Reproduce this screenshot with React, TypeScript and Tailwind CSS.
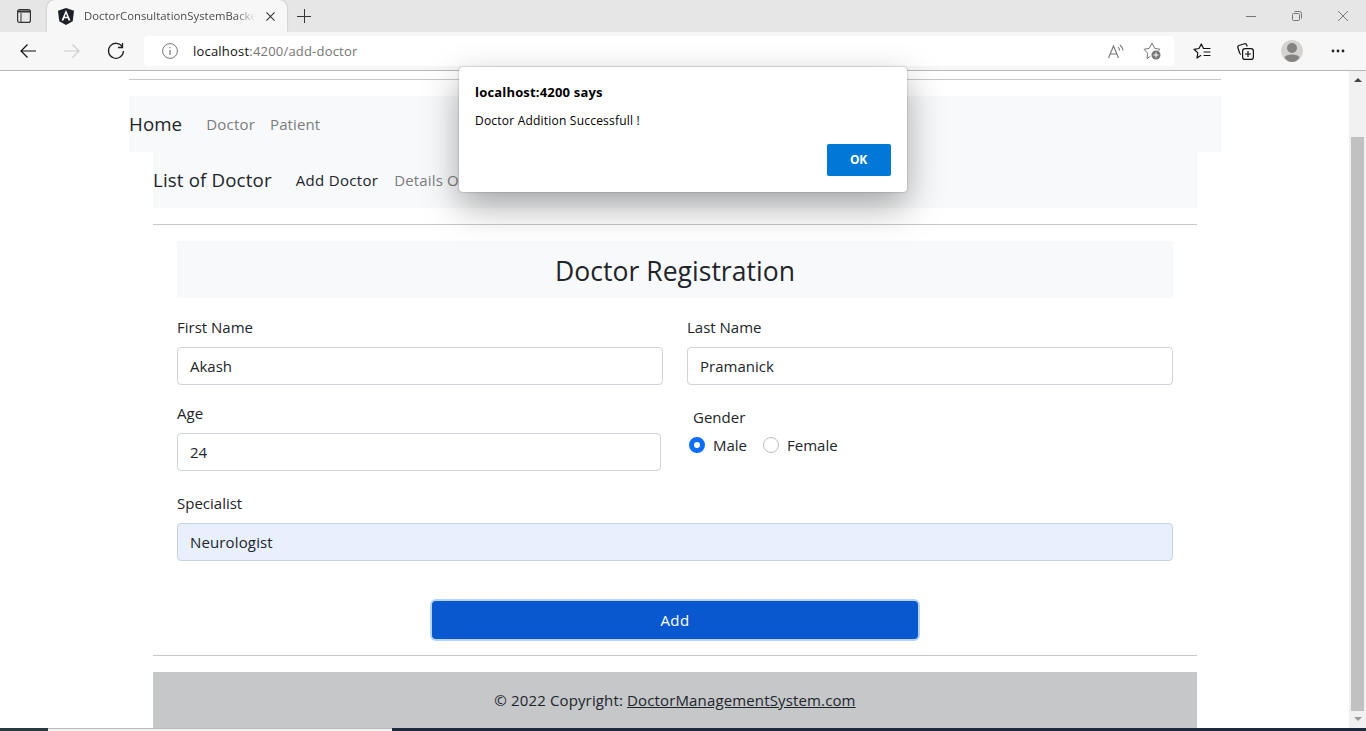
import React from "react";

function Star({ children, className }: { children?: React.ReactNode; className: string }) {
  return (
    <svg viewBox="0 0 18 18" fill="none" stroke="currentColor" strokeWidth="1" strokeLinejoin="round" strokeLinecap="round" className={className}>
      {children}
    </svg>
  );
}

function WindowControls() {
  return (
    <div className="ml-auto flex h-full items-center text-[#777]">
      <svg viewBox="0 0 10 10" className="mr-[36px] h-[10px] w-[10px]" stroke="currentColor" fill="none">
        <path d="M0 5.5h10" />
      </svg>
      <svg viewBox="0 0 10 10" className="mr-[36px] h-[10px] w-[10px]" stroke="currentColor" fill="none">
        <rect x=".5" y="2.5" width="7" height="7" rx="1" />
        <path d="M2.5.5H7.500Q9.500.5 9.500 2.500V7.500" />
      </svg>
      <svg viewBox="0 0 10 10" className="mr-[18px] h-[10px] w-[10px]" stroke="currentColor" fill="none">
        <path d="M0 0l10 10M10 0L0 10" />
      </svg>
    </div>
  );
}

function TabStrip() {
  return (
    <div className="flex h-8 bg-[#e6e6e6]">
      <div className="flex w-[47px] items-center pl-[17px]">
        <svg viewBox="0 0 14 14" className="h-[14px] w-[14px] text-[#333]" fill="none" stroke="currentColor">
          <rect x=".6" y=".6" width="12.800" height="12.800" rx="2" strokeWidth="1.200" />
          <path d="M1 2.500h12" strokeWidth="2" />
          <path d="M4 4v9" />
        </svg>
      </div>
      <div className="flex w-60 items-center rounded-t-lg bg-[#f7f7f7] shadow-[0_0_2px_#aaa]">
        <svg viewBox="0 0 16 17" className="ml-[11px] h-[17px] w-4">
          <path d="M8 0l8 2.800-1.300 10.400L8 17l-6.700-3.800L0 2.800z" fill="#1d2026" />
          <path d="M8 2L3.500 12.500h2l.8-2.200h3.400l.8 2.200h2zM8 5.500l1.200 3.300H6.800z" fill="#fff" fillRule="evenodd" />
        </svg>
        <span className="ml-[10px] w-[172px] overflow-hidden whitespace-nowrap bg-linear-to-r from-[#444] from-88% to-transparent bg-clip-text text-[11.3px] tracking-[0.03px] text-transparent">DoctorConsultationSystemBacke</span>
        <svg viewBox="0 0 10 10" className="ml-[10px] h-[9px] w-[9px] text-[#333]" stroke="currentColor" strokeWidth="1.200">
          <path d="M.5.5l9 9M9.500.5l-9 9" />
        </svg>
      </div>
      <div className="flex items-center pl-[10px]">
        <svg viewBox="0 0 14 14" className="h-[14px] w-[14px] text-[#333]" stroke="currentColor">
          <path d="M7.500 0v14M0 7.500h14" />
        </svg>
      </div>
      <WindowControls />
    </div>
  );
}

function Toolbar() {
  return (
    <div className="flex h-[39px] items-center border-b border-[#b8b8b8] bg-[#f7f7f7]">
      <svg viewBox="0 0 16 14" className="ml-5 h-[14px] w-4 text-[#111]" fill="none" stroke="currentColor" strokeWidth="1.200">
        <path d="M16 7H1M7.500.5L1 7l6.500 6.500" />
      </svg>
      <svg viewBox="0 0 16 14" className="ml-7 h-[14px] w-4 text-[#ccc]" fill="none" stroke="currentColor" strokeWidth="1.200">
        <path d="M0 7h15M8.500.5L15 7l-6.500 6.500" />
      </svg>
      <svg viewBox="0 0 18 18" className="ml-[27px] h-[18px] w-[18px] text-[#222]" fill="none" stroke="currentColor" strokeWidth="1.300">
        <path d="M15.500 5A7.500 7.500 0 1 0 16.500 9M15.500 1v4.500H11" />
      </svg>
      <div className="ml-[19px] flex h-[30px] w-[1030px] items-center rounded-sm bg-white text-[#767676]">
        <svg viewBox="0 0 16 16" className="ml-[18px] h-4 w-4" fill="none" stroke="currentColor">
          <circle cx="8" cy="8" r="7.400" />
          <path d="M8 7v5M8 4v1.300" strokeWidth="1.200" />
        </svg>
        <span className="ml-[15px] pt-px text-[13px] tracking-[0.2px]"><span className="text-[#111]">localhost</span>:4200/add-doctor</span>
        <svg viewBox="0 0 16 15" className="ml-auto h-[15px] w-4" fill="none" stroke="currentColor" strokeWidth="1.100">
          <path d="M.5 14L5.500 2l5 12M2.200 10h6.600M10 3.200q1.500 1.400 1.600 3.300M12 1q2.700 2.300 3 5.500" />
        </svg>
        <Star className="mr-[13px] ml-[19px] h-[18px] w-[18px]">
          <path d="M7 14.500L4 16.500l.6-5.300L1 7.300l5.200-1L9 1.200l2.700 5.100 5.300 1-1.500 1.500" />
          <circle cx="13" cy="13" r="4.500" fill="currentColor" stroke="none" />
          <path d="M13 10.800v4.400M10.800 13h4.400" stroke="#fff" />
        </Star>
      </div>
      <Star className="ml-[19px] h-[18px] w-[18px] text-[#111]">
        <path d="M7.700 13.600L4 16l.8-5.100L1 7.300l5-.8L8.300 2l2.200 4.500H17M11 10h6M11 13.500h6" strokeWidth="1.200" />
      </Star>
      <svg viewBox="0 0 17 17" className="ml-[26px] h-[17px] w-[17px] text-[#111]" fill="none" stroke="currentColor" strokeWidth="1.200">
        <path d="M4 11.500Q2.800 11 2.500 9.500L.8 4.500Q.5 3 2 2.500L7.500.8Q9 .3 9.700 2l.5 1.500" />
        <rect x="5.600" y="5.600" width="10.800" height="10.800" rx="2.500" />
        <path d="M11 8v6M8 11h6" />
      </svg>
      <svg viewBox="0 0 22 22" className="ml-[27px] h-[22px] w-[22px]">
        <circle cx="11" cy="11" r="11" fill="#d5d3d1" />
        <circle cx="11" cy="8" r="5" fill="#858381" />
        <path d="M3.500 17.500Q5 14.500 11 14.500t7.500 3Q15.500 22 11 22t-7.500-4.500" fill="#858381" />
      </svg>
      <svg viewBox="0 0 14 4" className="ml-[28px] h-1 w-[14px]" fill="#222">
        <circle cx="2" cy="2" r="1.400" />
        <circle cx="7" cy="2" r="1.400" />
        <circle cx="12" cy="2" r="1.400" />
      </svg>
    </div>
  );
}

function Field({ label, value, className, filled }: { label: string; value: string; className: string; filled?: boolean }) {
  return (
    <label className={`block ${className}`}>
      <span className="block h-6 leading-6">{label}</span>
      <span className={`mt-2 flex h-[38px] items-center rounded border px-3 ${filled ? "border-[#c8d3e2] bg-[#e8f0fe] tracking-[0.14px]" : "border-[#ced4da] bg-white"}`}>{value}</span>
    </label>
  );
}

function Dialog() {
  return (
    <div className="absolute top-[67px] left-[459px] flex h-[125px] w-[448px] flex-col rounded bg-white px-4 text-black shadow-[0_0_2px_rgba(0,0,0,0.35),0_14px_36px_rgba(0,0,0,0.34)]">
      <div className="mt-4 text-[13px] leading-[18px] font-bold tracking-[0.18px]">localhost:4200 says</div>
      <div className="mt-[11px] text-[12px] leading-[18px] tracking-[0.21px]">Doctor Addition Successfull !</div>
      <button className="mt-[14px] ml-auto h-8 w-16 rounded-xs bg-[#0078d7] pr-[1px] text-[12px] font-bold tracking-[-0.2px] text-white">OK</button>
    </div>
  );
}

function Scrollbar() {
  return (
    <div className="flex w-[17px] flex-col items-center bg-[#f1f1f1]">
      <svg viewBox="0 0 8 4" className="mt-[7px] h-1 w-2"><path d="M0 4l4-4 4 4z" fill="#444" /></svg>
      <div className="mt-[55px] h-[574px] w-[13px] bg-[#c1c1c1]" />
      <svg viewBox="0 0 8 4" className="mt-[6px] h-1 w-2"><path d="M0 0l4 4 4-4z" fill="#999" /></svg>
    </div>
  );
}

export default function App() {
  return (
    <div className="relative flex h-[731px] w-[1366px] flex-col overflow-hidden bg-white font-['Open_Sans','Noto_Sans',sans-serif] text-[15px] text-[#212529]">
      <TabStrip />
      <Toolbar />
      <div className="flex h-[657px]">
        <main className="w-[1349px] overflow-hidden pt-2 pl-[129px]">
          <div className="w-[1092px]">
            <div className="h-px bg-[#c7c8c9]" />
            <nav className="mt-4 flex h-14 items-center bg-[#f8f9fa] pt-px text-[#7b7c7d]">
              <span className="text-[18.7px] tracking-[0.1px] text-[#212529]">Home</span>
              <span className="ml-6 tracking-[0.2px]">Doctor</span>
              <span className="ml-[15px] tracking-[0.1px]">Patient</span>
            </nav>
            <div className="px-6">
              <nav className="flex h-14 items-center bg-[#f8f9fa] pt-px text-[#7b7c7d]">
                <span className="text-[18.7px] tracking-[0.15px] text-[#212529]">List of Doctor</span>
                <span className="ml-6 tracking-[0.32px] text-[#212529]">Add Doctor</span>
                <span className="ml-4 tracking-[0.15px]">Details Of Doctor</span>
              </nav>
              <div className="mt-4 h-px bg-[#c7c8c9]" />
              <form className="px-6 pt-4">
                <h1 className="flex h-[57px] items-center justify-center bg-[#f8f9fa] pt-[5px] text-[26.5px] tracking-[0.04px]">Doctor Registration</h1>
                <div className="mt-[17px] flex gap-6">
                  <Field label="First Name" value="Akash" className="w-[486px]" />
                  <Field label="Last Name" value="Pramanick" className="w-[486px]" />
                </div>
                <div className="mt-4 flex">
                  <Field label="Age" value="24" className="w-[484px]" />
                  <div className="ml-7 pt-1">
                    <div className="ml-1 leading-6">Gender</div>
                    <div className="mt-1 flex h-6 items-center">
                      <span className="h-4 w-4 rounded-full border-[5px] border-[#0d6efd] bg-white" />
                      <span className="ml-2">Male</span>
                      <span className="ml-4 h-4 w-4 rounded-full border border-[#bfbfbf] bg-white" />
                      <span className="ml-2">Female</span>
                    </div>
                  </div>
                </div>
                <Field label="Specialist" value="Neurologist" className="mt-5" filled />
                <button type="button" className="mx-auto mt-10 flex h-[38px] w-[486px] items-center justify-center rounded bg-[#0a58d0] tracking-[0.4px] text-white shadow-[0_0_0_2px_#b6d4fe]">Add</button>
              </form>
              <div className="mt-4 h-px bg-[#c7c8c9]" />
              <footer className="mt-4 flex h-14 items-center justify-center bg-[#c6c7c9]">
                <span className="tracking-[0.14px] whitespace-pre">© 2022 Copyright: <span className="underline">DoctorManagementSystem.com</span></span>
              </footer>
            </div>
          </div>
        </main>
        <Scrollbar />
      </div>
      <div className="flex h-[3px] bg-[#1b2b3d]">
        <div className="w-12 bg-[#263a40]" />
        <div className="w-[344px] border-t border-[#b9b9b9] bg-[#f1f1f1]" />
      </div>
      <Dialog />
    </div>
  );
}
